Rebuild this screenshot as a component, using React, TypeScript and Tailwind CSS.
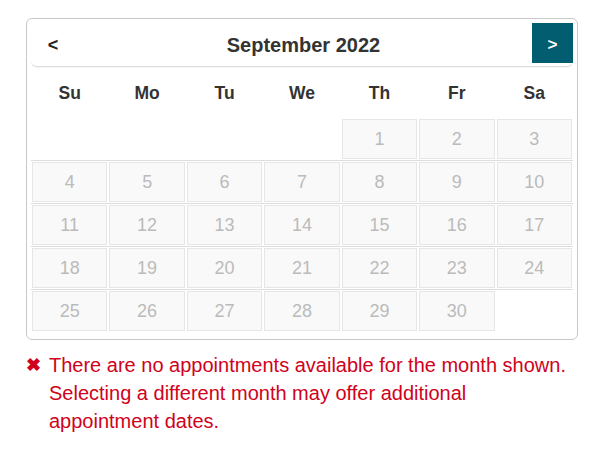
import React from "react";

const dayNames = ["Su", "Mo", "Tu", "We", "Th", "Fr", "Sa"];

// September 2022 starts on a Thursday
const buildWeeks = () => {
  const cells: (number | null)[] = [null, null, null, null];
  for (let d = 1; d <= 30; d++) cells.push(d);
  while (cells.length % 7 !== 0) cells.push(null);
  const weeks: (number | null)[][] = [];
  for (let i = 0; i < cells.length; i += 7) weeks.push(cells.slice(i, i + 7));
  return weeks;
};

const App = () => {
  const weeks = buildWeeks();

  return (
    <div className="min-h-screen bg-white pl-[26px] pt-[18px] font-['Liberation_Sans',Arial,sans-serif]">
      <div className="w-[552px] rounded-[6px] border border-[#c8c8c8] px-[4px] pt-[4px] pb-[7px]">
        <div className="flex h-[44px] items-start justify-between rounded-[6px] border-b border-[#dcdcdc] shadow-[0_1px_1px_rgba(0,0,0,0.04)]">
          <button className="flex h-[43px] w-[44px] items-center justify-center pt-[2px] text-[18px] font-bold text-[#222]">
            &lt;
          </button>
          <div className="flex h-[43px] items-center text-[20px] font-bold text-[#333]">
            September 2022
          </div>
          <button className="flex h-[40px] w-[41px] items-center justify-center pt-[3px] bg-[#035d70] text-[17px] font-bold text-white">
            &gt;
          </button>
        </div>

        <div className="grid h-[51px] grid-cols-7 items-center pt-[2px]">
          {dayNames.map((n) => (
            <div key={n} className="text-center text-[17.5px] font-bold text-[#333]">
              {n}
            </div>
          ))}
        </div>

        {weeks.map((week, wi) => (
          <div
            key={wi}
            className={`grid grid-cols-7 py-[1px] ${wi > 0 ? "border-t border-[#dddddd]" : ""}`}
          >
            {week.map((d, di) => (
              <div key={di} className="px-[1px]">
                {d !== null ? (
                  <div className="flex h-[40px] items-center justify-center border border-[#e6e6e6] bg-[#f9f9f9] text-[18px] text-[#bbbbbb]">
                    {d}
                  </div>
                ) : (
                  <div className="h-[40px]" />
                )}
              </div>
            ))}
          </div>
        ))}
      </div>

      <div className="mt-[11px] flex items-start text-[20px] leading-[28px] text-[#d0021b]">
        <span className="w-[23px] shrink-0 text-[18px] font-bold">✖</span>
        <p className="w-[525px]">
          There are no appointments available for the month shown. Selecting a
          different month may offer additional appointment dates.
        </p>
      </div>
    </div>
  );
};

export default App;
